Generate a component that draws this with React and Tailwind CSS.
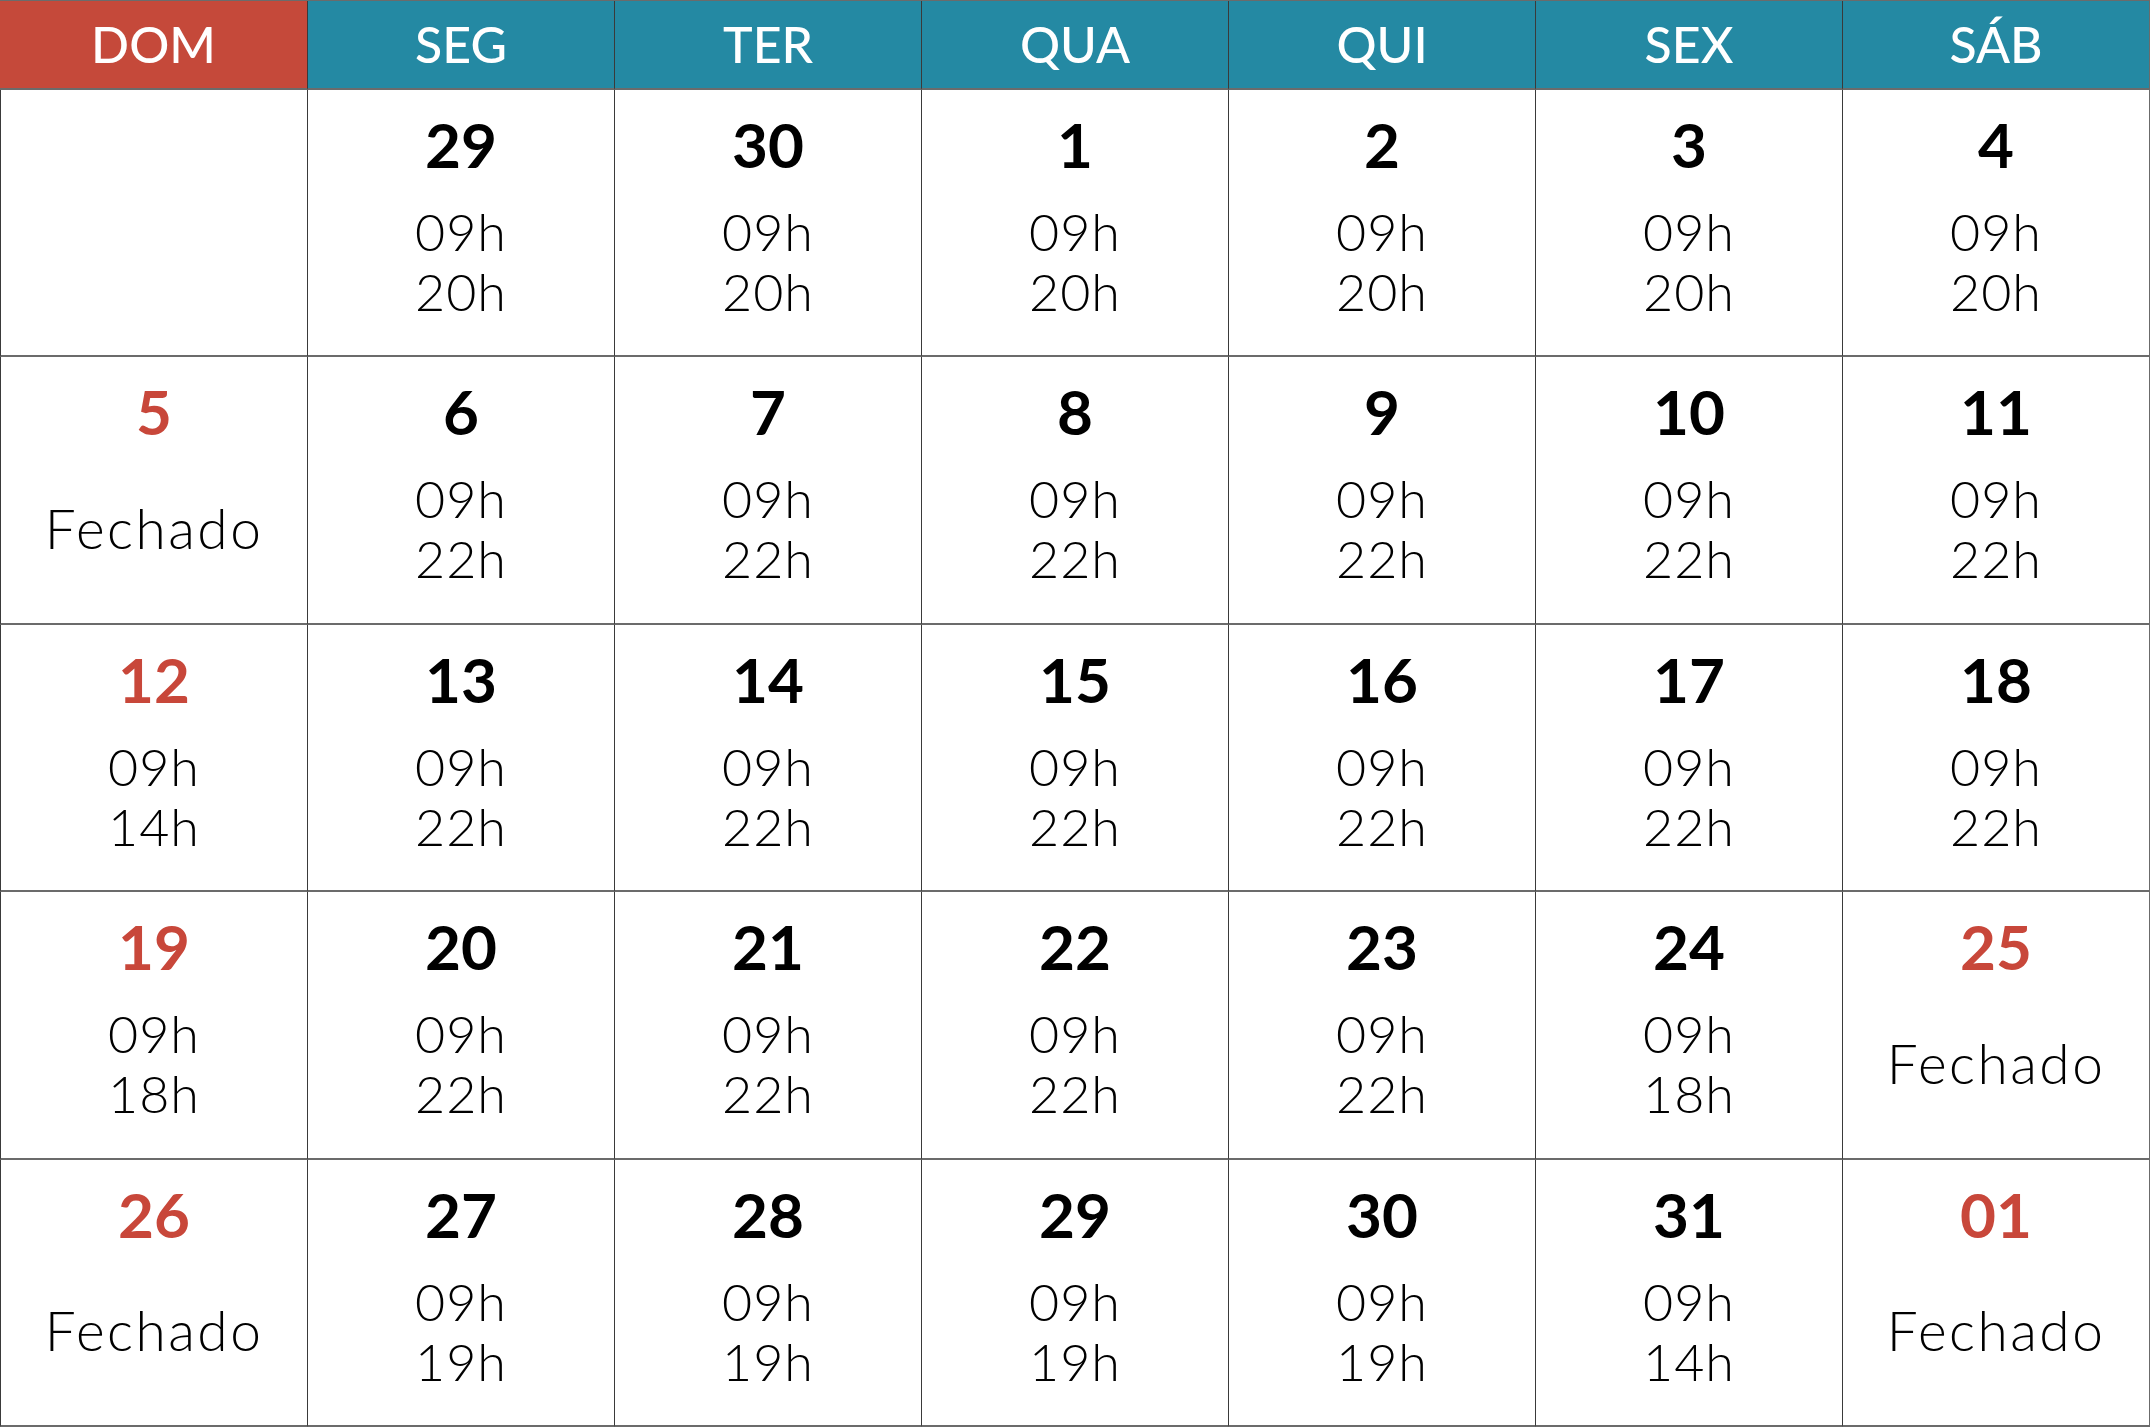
import React from "react";

const days = ["DOM", "SEG", "TER", "QUA", "QUI", "SEX", "SÁB"];

const F = "fechado";
const rows = [
  [null, ["29", "09h", "20h"], ["30", "09h", "20h"], ["1", "09h", "20h"], ["2", "09h", "20h"], ["3", "09h", "20h"], ["4", "09h", "20h"]],
  [["5", F, null, true], ["6", "09h", "22h"], ["7", "09h", "22h"], ["8", "09h", "22h"], ["9", "09h", "22h"], ["10", "09h", "22h"], ["11", "09h", "22h"]],
  [["12", "09h", "14h", true], ["13", "09h", "22h"], ["14", "09h", "22h"], ["15", "09h", "22h"], ["16", "09h", "22h"], ["17", "09h", "22h"], ["18", "09h", "22h"]],
  [["19", "09h", "18h", true], ["20", "09h", "22h"], ["21", "09h", "22h"], ["22", "09h", "22h"], ["23", "09h", "22h"], ["24", "09h", "18h"], ["25", F, null, true]],
  [["26", F, null, true], ["27", "09h", "19h"], ["28", "09h", "19h"], ["29", "09h", "19h"], ["30", "09h", "19h"], ["31", "09h", "14h"], ["01", F, null, true]],
];

const font = { fontFamily: "Lato, 'Noto Sans', sans-serif" };

function Cell({ data }) {
  const base =
    "flex flex-col items-center bg-white border-l border-[#3a3a3a] border-b-2 border-b-[#6b6b6b]";
  if (!data) return <div className={base} />;
  const [num, a, b, red] = data;
  return (
    <div className={base}>
      <div
        className={
          "pt-[23px] text-[62px] leading-none font-bold " +
          (red ? "text-[#c8473a]" : "text-black")
        }
      >
        {num}
      </div>
      {a === F ? (
        <div className="mt-[26px] h-[120px] flex items-center text-[55px] leading-none font-light tracking-[2.5px] text-black">
          Fechado
        </div>
      ) : (
        <div className="mt-[26px] flex flex-col items-center text-[52px] leading-[60px] font-light tracking-[1px] text-black">
          <span>{a}</span>
          <span>{b}</span>
        </div>
      )}
    </div>
  );
}

export default function App() {
  return (
    <div
      className="w-[2150px] h-[1427px] bg-white border-t border-[#6b6b6b] border-r grid grid-cols-7 grid-rows-[89px_repeat(5,1fr)]"
      style={font}
    >
      {days.map((d, i) => (
        <div
          key={d}
          className={
            "flex items-center justify-center text-white text-[50px] font-medium border-b-2 border-b-[#6b6b6b] " +
            (i === 0 ? "bg-[#c5493a]" : "bg-[#2489a3] border-l border-l-[#3a3a3a]")
          }
        >
          {d}
        </div>
      ))}
      {rows.map((r, ri) =>
        r.map((c, ci) => <Cell key={ri + "-" + ci} data={c} />)
      )}
    </div>
  );
}
